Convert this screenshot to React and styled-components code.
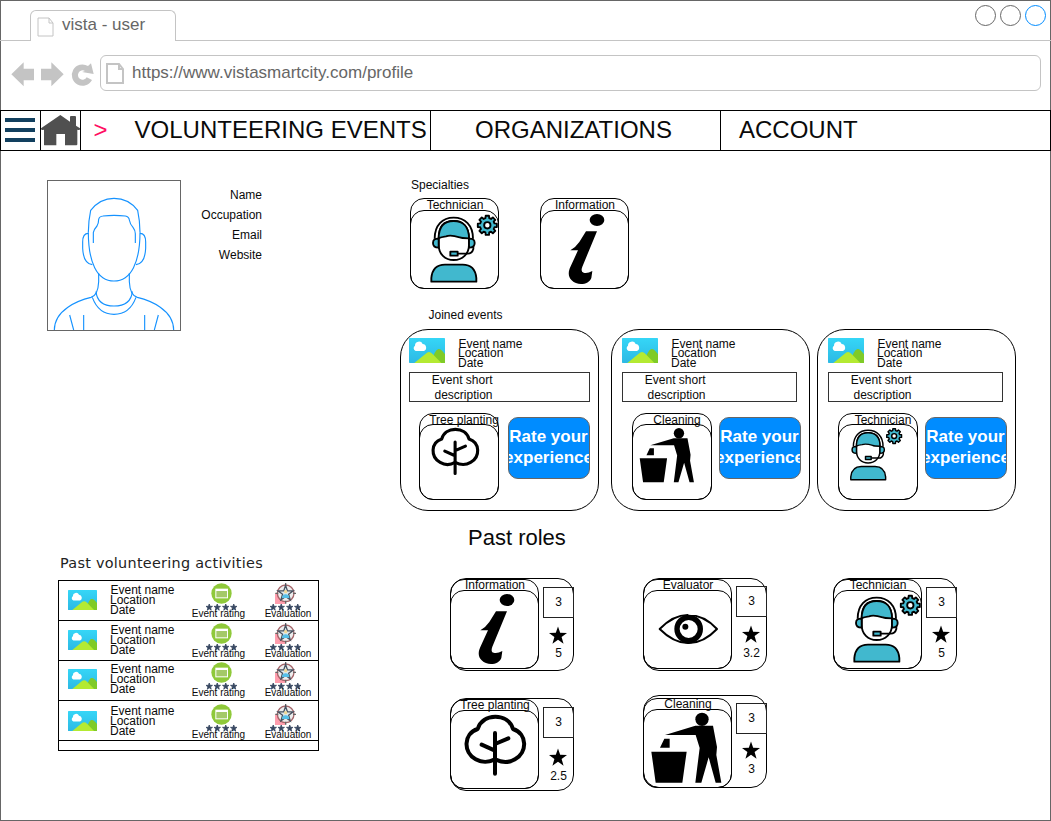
import React from "react";
import styled, { createGlobalStyle } from "styled-components";

const GlobalStyle = createGlobalStyle`
  * { box-sizing: border-box; }
  body {
    margin: 0;
    background: #fff;
    color: #0a0a0a;
    font-family: "Liberation Sans", Arial, sans-serif;
    font-size: 12px;
  }
  svg { display: block; flex: none; overflow: visible; }
`;

const Window = styled.div`
  width: 1051px;
  height: 821px;
  overflow: hidden;
  background: #fff;
  box-shadow: inset 0 0 0 1px #666;
`;

/* ---------- browser chrome ---------- */

const TabStrip = styled.div`
  display: flex;
  justify-content: space-between;
  height: 41px;
  padding: 5px 5px 0 30px;
  border-bottom: 1px solid #c4c4c4;
`;

const Tab = styled.div`
  display: flex;
  width: 146px;
  height: 31px;
  margin-top: 5px;
  padding: 6px 0 0 6px;
  gap: 8px;
  background: #fff;
  border: 1px solid #c4c4c4;
  border-bottom: 0;
  border-radius: 6px 6px 0 0;
`;

const ChromeText = styled.span`
  font-size: 17px;
  line-height: 20px;
  margin-top: ${(p) => p.$shift || 0}px;
  color: #666;
  white-space: nowrap;
`;

const WindowButtons = styled.div`
  display: flex;
  gap: 4px;
`;

const WindowButton = styled.span`
  width: 21px;
  height: 21px;
  border: 1px solid ${(p) => p.$color};
  border-radius: 50%;
`;

const AddressRow = styled.div`
  display: flex;
  height: 69px;
  padding: 14px 10px 0 11px;
`;

const NavIcons = styled.div`
  display: flex;
  width: 89px;
  padding-top: 7px;
`;

const AddressField = styled.div`
  display: flex;
  flex: 1;
  height: 36px;
  padding: 7px 0 0 5px;
  gap: 8px;
  border: 1px solid #c4c4c4;
  border-radius: 6px;
`;

/* ---------- site navigation ---------- */

const SiteNav = styled.nav`
  display: flex;
  height: 41px;
  border: 1px solid #000;
`;

const NavCell = styled.div`
  display: flex;
  align-items: center;
  width: ${(p) => p.$width}px;
  padding: 0 0 2px ${(p) => p.$pad || 0}px;
  border-right: ${(p) => (p.$last ? 0 : "1px solid #000")};
  font-size: 24px;
  line-height: 36px;
  white-space: nowrap;
`;

const Prompt = styled.span`
  width: 41px;
  color: #ff0d62;
`;

/* ---------- page body ---------- */

const Body = styled.main`
  display: flex;
`;

const LeftColumn = styled.section`
  width: 400px;
  padding: 29px 0 0 47px;
`;

const RightColumn = styled.section`
  flex: 1;
  padding-top: 26px;
`;

const Profile = styled.div`
  display: flex;
  height: 151px;
`;

const Photo = styled.div`
  width: 134px;
  height: 151px;
  border: 1px solid #666;
  overflow: hidden;
`;

const ProfileFields = styled.div`
  width: 81px;
  padding-top: 5px;
  text-align: right;
  line-height: 20px;
`;

const ActivitiesTitle = styled.h2`
  margin: 222px 0 0 13px;
  height: 27px;
  font: 400 14.4px/20px "DejaVu Sans", Verdana, sans-serif;
  letter-spacing: 0.28px;
  color: #222;
  white-space: nowrap;
`;

const ActivityTable = styled.div`
  width: 261px;
  height: 171px;
  margin-left: 11px;
  border: 1px solid #000;
`;

const ActivityRow = styled.div`
  display: flex;
  height: 40px;
  padding: ${(p) => 4 + p.$shift}px 0 0 9px;
  border-bottom: 1px solid #000;
`;

const Facts = styled.div`
  width: ${(p) => p.$width}px;
  margin: ${(p) => p.$margin || "0"};
  line-height: 10px;
  white-space: nowrap;
`;

const Fact = styled.div`
  height: ${(p) => p.$height || 10}px;
  padding-left: ${(p) => p.$indent || 0}px;
`;

const Thumb = styled.div`
  padding-top: ${(p) => p.$top || 0}px;
`;

const Score = styled.div`
  display: flex;
  flex-direction: column;
  align-items: center;
  flex: none;
  width: ${(p) => p.$width}px;
  margin-top: -2px;
`;

const ScoreLabel = styled.div`
  margin: -2px 0 0 ${(p) => p.$offset}px;
  font-size: 10px;
  line-height: 10px;
  white-space: nowrap;
`;

/* ---------- headings of the right column ---------- */

const Label = styled.h3`
  margin: ${(p) => p.$margin};
  font-size: ${(p) => p.$size || 12}px;
  line-height: ${(p) => p.$line || 16}px;
  font-weight: 400;
`;

/* ---------- role tile ---------- */

const sizes = {
  large: { width: 89, height: 91, title: 11, line: 12, face: 79, pad: 1 },
  role: { width: 89, height: 90, title: 10, line: 11, face: 79, pad: 1 },
  small: { width: 80, height: 87, title: 10, line: 12, face: 76, pad: 10 },
};

const TileBox = styled.div`
  flex: none;
  width: ${(p) => sizes[p.$size].width}px;
  height: ${(p) => sizes[p.$size].height}px;
  border: 1px solid #000;
  border-radius: 14px;
`;

const TileTitle = styled.div`
  display: flex;
  justify-content: center;
  height: ${(p) => sizes[p.$size].title}px;
  padding-left: ${(p) => sizes[p.$size].pad}px;
  line-height: ${(p) => sizes[p.$size].line}px;
  white-space: nowrap;
`;

const TileFace = styled.div`
  height: ${(p) => sizes[p.$size].face}px;
  margin: 0 -1px;
  border: 1px solid #000;
  border-radius: 14px;
`;

const ArtShift = styled.div`
  margin: ${(p) => p.$y}px 0 0 ${(p) => p.$x}px;
`;

const TileRow = styled.div`
  display: flex;
  gap: 41px;
  margin: 5px 0 0 10px;
`;

/* ---------- joined events ---------- */

const EventList = styled.div`
  display: flex;
  margin-top: 6px;
`;

const EventCard = styled.article`
  width: 199px;
  height: 182px;
  margin-right: ${(p) => p.$after}px;
  padding: 8px 0 0 ${(p) => p.$inset}px;
  border: 1px solid #000;
  border-radius: 28px;
`;

const EventHead = styled.div`
  display: flex;
  height: 34px;
`;

const EventNote = styled.div`
  width: ${(p) => p.$width}px;
  height: 30px;
  padding-right: ${(p) => p.$width - 84.5}px;
  border: 1px solid #333;
  text-align: right;
  line-height: 15px;
`;

const EventFoot = styled.div`
  display: flex;
  margin: 11px 0 0 10px;
  gap: ${(p) => p.$gap}px;
`;

const RateButton = styled.button`
  display: flex;
  justify-content: center;
  width: 82px;
  height: 62px;
  margin: 4px 0 0;
  padding: 8px 1px 0 0;
  overflow: hidden;
  border: 1px solid #666;
  border-radius: 10px;
  background: #008cff;
  color: #fff;
  font: 700 17px/21px "Liberation Sans", Arial, sans-serif;
`;

/* ---------- past roles ---------- */

const RoleGrid = styled.div`
  display: flex;
  align-items: flex-start;
  margin: ${(p) => p.$margin};
`;

const RoleCard = styled.article`
  display: flex;
  gap: 4px;
  width: 124px;
  height: 93px;
  margin: ${(p) => p.$margin || "0"};
  padding-top: ${(p) => p.$tileTop}px;
  border: 1px solid #000;
  border-radius: 16px;
`;

const RoleTile = styled.div`
  margin-left: -1px;
`;

const RoleStats = styled.div`
  display: flex;
  flex-direction: column;
  align-items: center;
  width: 31px;
  margin-top: ${(p) => p.$top}px;
`;

const Count = styled.div`
  width: 31px;
  height: 31px;
  border: 1px solid #222;
  text-align: center;
  line-height: 28px;
`;

const Rating = styled.div`
  margin-top: ${(p) => p.$top}px;
  line-height: 14px;
`;

const StarSlot = styled.div`
  margin-top: ${(p) => p.$top}px;
  padding-right: 2px;
`;

/* ---------- drawings ---------- */

const PageIcon = ({ w, h, stroke }) => (
  <svg width={w} height={h} viewBox={`0 0 ${w} ${h}`} fill="none" stroke="#c4c4c4" strokeWidth={stroke}>
    <path d={`M1 1H${w - 5}L${w - 1} 6V${h - 1}H1Z M${w - 5} 1V6H${w - 1}`} />
  </svg>
);

const BrowserArrows = () => (
  <svg width="84" height="26" viewBox="0 0 252 78" fill="#c4c4c4">
    <path d="M1 37L38 1V20H69V55H38V73Z" />
    <path d="M158 37L121 1V20H90V55H121V73Z" />
    <path d="M243 54A32 32 0 1 1 231 12L240 4L248 36L213 30L222 27A14 14 0 1 0 227 46Z" />
  </svg>
);

const MenuIcon = () => (
  <svg width="30" height="26" viewBox="0 0 30 26" fill="#12405f">
    <path d="M0 1H30V5H0Z M0 11H30V15H0Z M0 21H30V25H0Z" />
  </svg>
);

const HomeIcon = () => (
  <svg width="39" height="30" viewBox="0 0 117 90" fill="#505050">
    <path d="M58 0L0 40Q-1 48 9 44V89Q9 91 12 91H46V57H72V91H106Q109 91 109 88V44Q119 48 117 40L105 32V6Q105 3 102 3H90Q87 3 87 6V20Z" />
  </svg>
);

const AvatarDrawing = () => (
  <svg width="132" height="149" viewBox="54 33 396 447" fill="none" stroke="#1592ff" strokeWidth="3.4">
    <path d="M175 187Q175 154 182 121Q210 85 252 85Q296 85 323 121Q330 154 330 187" />
    <path d="M175 187C175 275 200 333 252 333C304 333 330 275 330 187" />
    <path d="M190 219V188Q192 178 201 168Q206 160 206 148Q208 139 219 138Q252 134 286 138Q297 140 298 150Q300 162 309 172Q316 181 316 191V219" />
    <path d="M175 190Q158 190 158 216V235Q160 281 187 284M330 190Q347 190 347 216V235Q345 281 318 284" />
    <path d="M206 310V335Q204 376 183 382C145 391 73 419 73 480M298 310V335Q300 376 322 382C360 391 431 419 431 480" />
    <path d="M198 364Q202 408 252 408Q303 408 307 364M187 382Q206 433 252 433Q299 433 318 382" />
    <path d="M119 435L131 480M161 435V480M344 435V480M385 435L373 480" />
  </svg>
);

const Landscape = ({ w, h }) => (
  <svg width={w} height={h} viewBox="0 0 108 75" preserveAspectRatio="none">
    <defs>
      <linearGradient id="sky" x1="0" y1="0" x2="0" y2="1">
        <stop offset="0" stopColor="#35d6f7" />
        <stop offset="1" stopColor="#2db9e4" />
      </linearGradient>
    </defs>
    <rect width="108" height="75" rx="2" fill="url(#sky)" />
    <path d="M66 75Q78 35 87 34Q94 30 108 49V75Z" fill="#7fcb28" />
    <path d="M16 75L50 47Q60 37 70 47L97 75Z" fill="#b4ea32" />
    <path d="M20 39A9 9 0 0 1 18 23A12 12 0 0 1 41 18A11 11 0 0 1 45 39Z" fill="#fff" />
  </svg>
);

const gearPath = (() => {
  const points = [];
  for (let i = 0; i < 8; i++) {
    [[-15, 22], [-10, 29], [10, 29], [15, 22]].forEach(([deg, r]) => {
      const a = ((i * 45 + deg) * Math.PI) / 180;
      points.push(`${(277 + r * Math.sin(a)).toFixed(1)} ${(167 - r * Math.cos(a)).toFixed(1)}`);
    });
  }
  return `M${points.join("L")}Z`;
})();

const art = {
  Technician: (
    <g transform="translate(-45 -121)" stroke="#000" strokeWidth="5.6" strokeLinejoin="round">
      <path d="M109 336V325Q113 285 150 285H203Q240 285 244 325V336Z" fill="#41b8ce" />
      <path d="M119 207C119 167 142 144 176 144S234 167 234 207" fill="#fff" />
      <path d="M131 207C131 169 150 154 176 154S222 169 222 207V225C222 253 202 271 176 271S131 253 131 225Z" fill="#fff" />
      <path d="M131 206C131 169 150 154 176 154S222 169 222 206Q198 206 194 203Q167 195 153 200Q137 202 131 206Z" fill="#41b8ce" />
      <path d="M131 207V234Q114 234 114 220T131 207ZM222 207V234Q239 234 239 220T222 207Z" fill="#41b8ce" />
      <path d="M235 229V238Q231 252 218 252H189" fill="none" />
      <rect x="166" y="246" width="22" height="12" fill="#41b8ce" />
      <path d={gearPath} fill="#41b8ce" />
      <circle cx="277" cy="167" r="9.5" fill="#fff" />
    </g>
  ),
  Information: (
    <g transform="translate(-435 -121)">
      <ellipse cx="606" cy="151" rx="22" ry="18" />
      <path d="M573 185H606L562 291Q556 307 566 309Q577 312 592 304L589 325C583 345 547 350 530 332C518 320 520 305 526 292L549 242H526Q541 234 553 217Z" />
    </g>
  ),
  Tree: (
    <g transform="translate(-30 -571)" fill="none" stroke="#000" strokeWidth="12" strokeLinecap="round" strokeLinejoin="round">
      <path d="M165 719C185 729 208 729 225 719C263 698 262 642 219 628C212 604 191 591 166 591S120 604 113 628C70 642 69 698 107 719C124 729 147 729 165 719Z" />
      <path d="M165 640V762M165 673L205 656M125 675L165 693" />
    </g>
  ),
  Cleaning: (
    <g transform="translate(-26 -436)">
      <circle cx="203" cy="467" r="20" />
      <path d="M183 486H236L248 550L246 574L261 657H244L223 581L201 657H183L196 553L184 514H92Z" />
      <path d="M90 525H106V552H77ZM51 564H157L144 657H64Z" />
    </g>
  ),
  Eye: (
    <g transform="translate(-26 -76)" fill="none" stroke="#000" strokeWidth="6">
      <path d="M76 193Q118 150 162 151Q209 151 248 193Q207 236 162 235Q119 236 76 193Z" strokeLinejoin="round" />
      <circle cx="163" cy="193" r="35" strokeWidth="16" />
      <circle cx="153" cy="186" r="9" fill="#000" stroke="none" />
    </g>
  ),
};

const RoleArt = ({ name, small }) => (
  <svg width={small ? 69 : 89} height={small ? 61.2 : 79} viewBox="3 3 267 237">
    {art[name]}
  </svg>
);

const starPoints = "12,0 14.9,8.6 24,8.7 16.8,14.1 19.4,23 12,17.7 4.6,23 7.2,14.1 0,8.7 9.1,8.6";

const Star = () => (
  <svg width="18" height="18" viewBox="0 0 24 23">
    <polygon points={starPoints} />
  </svg>
);

const FourStars = () => (
  <svg width="31" height="7" viewBox="0 0 31 7">
    {[0, 8, 16.5, 24.5].map((x) => (
      <polygon key={x} points={starPoints} transform={`translate(${x} 0) scale(.27)`} fill="#364660" stroke="#364660" strokeWidth="3" />
    ))}
  </svg>
);

const CalendarBadge = () => (
  <svg width="21" height="21" viewBox="0 0 63 63">
    <circle cx="31.5" cy="31.5" r="30.5" fill="#8fc93a" />
    <rect x="13" y="17" width="38" height="29" fill="#fff" />
    <rect x="16" y="24" width="32" height="19" fill="#a4c968" />
  </svg>
);

const EvaluationBadge = () => (
  <svg width="21" height="21" viewBox="0 0 63 63">
    <path d="M0 31H31V63H0Z" fill="#ff9eae" />
    <circle cx="32" cy="31" r="25" fill="#ededed" stroke="#a5656a" strokeWidth="4" />
    <path d="M32 0V9M32 53V62M1 31H10M54 31H63" stroke="#666" strokeWidth="4" />
    <polygon points={starPoints} transform="translate(9 7) scale(1.9)" fill="#dce6ec" stroke="#485361" strokeWidth="2" />
    <circle cx="32" cy="26" r="5" fill="#f0d896" />
    <path d="M21 45Q21 34 32 34T43 45Z" fill="#55bfe8" />
  </svg>
);

/* ---------- composed parts ---------- */

const Tile = ({ title, icon, size = "large", x = 0, y = 0 }) => (
  <TileBox $size={size}>
    <TileTitle $size={size}>{title}</TileTitle>
    <TileFace $size={size}>
      <ArtShift $x={x} $y={y}>
        <RoleArt name={icon} small={size === "small"} />
      </ArtShift>
    </TileFace>
  </TileBox>
);

const events = [
  { title: "Tree planting", icon: "Tree", inset: 8, note: 181, gap: 9, after: 12, x: 0.7, y: -0.5 },
  { title: "Cleaning", icon: "Cleaning", inset: 10, note: 175, gap: 7, after: 7, x: 1, y: 1 },
  { title: "Technician", icon: "Technician", inset: 10, note: 175, gap: 7, after: 0, x: -4, y: 0 },
];

const topRoles = [
  { title: "Information", icon: "Information", count: 3, rating: 5, margin: "0", tileTop: 0, top: 8, star: 8, gap: 2 },
  { title: "Evaluator", icon: "Eye", count: 3, rating: "3.2", margin: "0 0 0 69px", tileTop: 0, top: 7, star: 8, gap: 3 },
  { title: "Technician", icon: "Technician", count: 3, rating: 5, margin: "0 0 0 66px", tileTop: 0, top: 8, star: 7, gap: 3 },
];

const bottomRoles = [
  { title: "Tree planting", icon: "Tree", count: 3, rating: "2.5", margin: "3px 0 0", tileTop: 0, top: 8, star: 10, gap: 3 },
  { title: "Cleaning", icon: "Cleaning", count: 3, rating: 3, margin: "0 0 0 69px", tileTop: 2, top: 5, star: 7, gap: 3 },
];

const Role = ({ role }) => (
  <RoleCard $margin={role.margin} $tileTop={role.tileTop}>
    <RoleTile>
      <Tile title={role.title} icon={role.icon} size="role" />
    </RoleTile>
    <RoleStats $top={role.top}>
      <Count>{role.count}</Count>
      <StarSlot $top={role.star}>
        <Star />
      </StarSlot>
      <Rating $top={role.gap}>{role.rating}</Rating>
    </RoleStats>
  </RoleCard>
);

export default function App() {
  return (
    <Window>
      <GlobalStyle />
      <TabStrip>
        <Tab>
          <PageIcon w={17} h={20} stroke={1} />
          <ChromeText $shift={-2}>vista - user</ChromeText>
        </Tab>
        <WindowButtons>
          <WindowButton $color="#666" />
          <WindowButton $color="#666" />
          <WindowButton $color="#008cff" />
        </WindowButtons>
      </TabStrip>
      <AddressRow>
        <NavIcons>
          <BrowserArrows />
        </NavIcons>
        <AddressField>
          <PageIcon w={18} h={21} stroke={2} />
          <ChromeText>https://www.vistasmartcity.com/profile</ChromeText>
        </AddressField>
      </AddressRow>
      <SiteNav>
        <NavCell $width={40} $pad={4}>
          <MenuIcon />
        </NavCell>
        <NavCell $width={40}>
          <HomeIcon />
        </NavCell>
        <NavCell $width={350} $pad={12.6}>
          <Prompt>&gt;</Prompt>
          VOLUNTEERING EVENTS
        </NavCell>
        <NavCell $width={290} $pad={44}>ORGANIZATIONS</NavCell>
        <NavCell $width={329} $pad={18} $last>ACCOUNT</NavCell>
      </SiteNav>
      <Body>
        <LeftColumn>
          <Profile>
            <Photo>
              <AvatarDrawing />
            </Photo>
            <ProfileFields>
              <div>Name</div>
              <div>Occupation</div>
              <div>Email</div>
              <div>Website</div>
            </ProfileFields>
          </Profile>
          <ActivitiesTitle>Past volunteering activities</ActivitiesTitle>
          <ActivityTable>
            {[0, 0, -1, 1].map((shift, i) => (
              <ActivityRow key={i} $shift={shift}>
                <Thumb $top={5}>
                  <Landscape w={29} h={20} />
                </Thumb>
                <Facts $width={81} $margin="0 0 0 13px">
                  <Fact $indent={0.5}>Event name</Fact>
                  <Fact>Location</Fact>
                  <Fact>Date</Fact>
                </Facts>
                <Score $width={61}>
                  <CalendarBadge />
                  <FourStars />
                  <ScoreLabel $offset={-6}>Event rating</ScoreLabel>
                </Score>
                <Score $width={66}>
                  <EvaluationBadge />
                  <FourStars />
                  <ScoreLabel $offset={6}>Evaluation</ScoreLabel>
                </Score>
              </ActivityRow>
            ))}
          </ActivityTable>
        </LeftColumn>
        <RightColumn>
          <Label $margin="0 0 0 11px">Specialties</Label>
          <TileRow>
            <Tile title="Technician" icon="Technician" />
            <Tile title="Information" icon="Information" />
          </TileRow>
          <Label $margin="18px 0 0 28.5px">Joined events</Label>
          <EventList>
            {events.map((e) => (
              <EventCard key={e.title} $inset={e.inset} $after={e.after}>
                <EventHead>
                  <Landscape w={36} h={25} />
                  <Facts $width={90} $margin="1px 0 0 13px">
                    <Fact $indent={0.5} $height={9}>Event name</Fact>
                    <Fact>Location</Fact>
                    <Fact>Date</Fact>
                  </Facts>
                </EventHead>
                <EventNote $width={e.note}>Event short description</EventNote>
                <EventFoot $gap={e.gap}>
                  <Tile title={e.title} icon={e.icon} size="small" x={e.x} y={e.y} />
                  <RateButton>Rate your experience</RateButton>
                </EventFoot>
              </EventCard>
            ))}
          </EventList>
          <Label $margin="14px 0 0 68px" $size={22} $line={26}>Past roles</Label>
          <RoleGrid $margin="27px 0 0 50px">
            {topRoles.map((r) => (
              <Role key={r.title} role={r} />
            ))}
          </RoleGrid>
          <RoleGrid $margin="24px 0 0 50px">
            {bottomRoles.map((r) => (
              <Role key={r.title} role={r} />
            ))}
          </RoleGrid>
        </RightColumn>
      </Body>
    </Window>
  );
}
